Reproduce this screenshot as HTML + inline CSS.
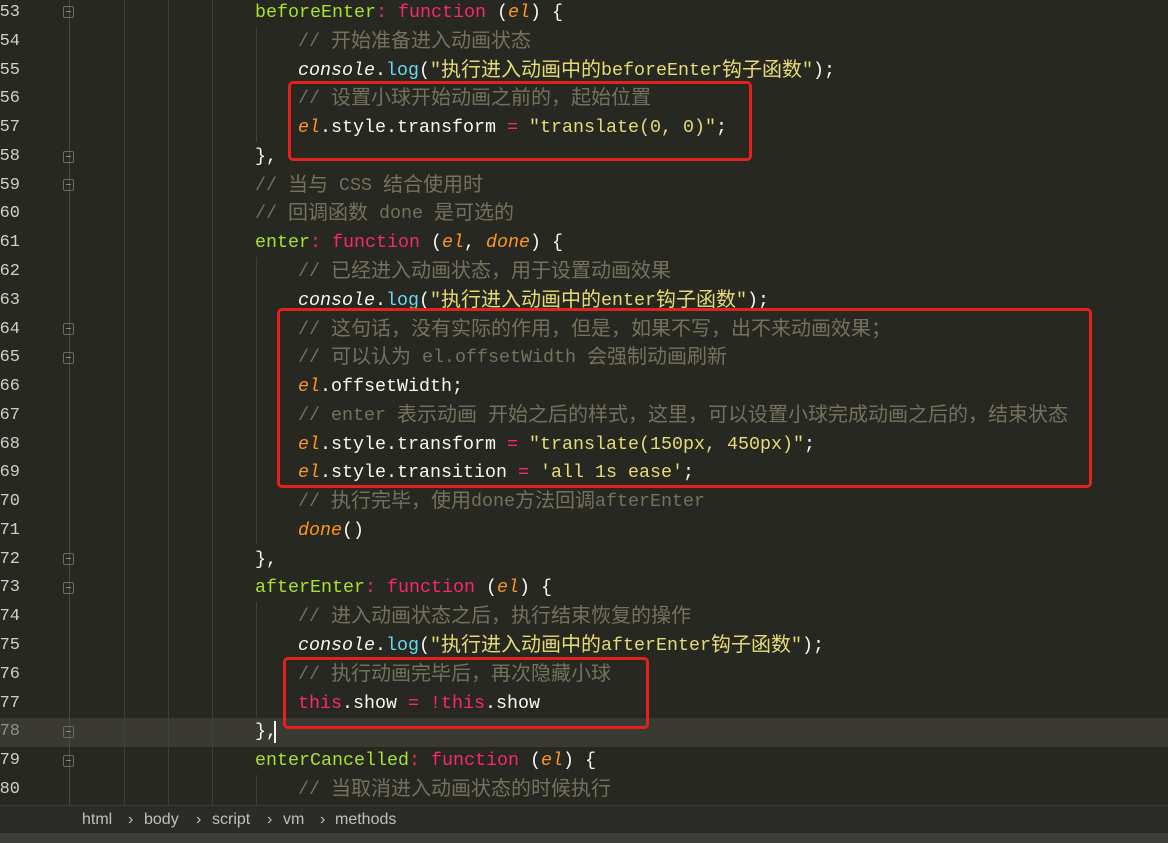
<!DOCTYPE html>
<html><head><meta charset="utf-8"><style>
html,body{margin:0;padding:0;}
body{width:1168px;height:843px;background:#272822;position:relative;overflow:hidden;font-family:"Liberation Mono","Noto Sans CJK SC",monospace;font-size:18.33px;color:#f8f8f2;}
.l{position:absolute;left:0;height:29px;line-height:29px;white-space:pre;width:1168px;}
.n{position:absolute;left:-12px;width:32px;text-align:right;color:#d0d0c8;font-size:17px;}
.t0{position:absolute;left:255px;}
.t1{position:absolute;left:298px;}
.c{font-family:"Noto Sans CJK SC",sans-serif;font-size:20px;line-height:0;position:relative;top:1px;}
.k{color:#a6e22e}.p{color:#f92672}.o{color:#fd971f;font-style:italic}.m{color:#75715e}.s{color:#e6db74}.i{font-style:italic}.b{color:#66d9ef}
.g{position:absolute;width:1px;background:#3f403a;}
.f{position:absolute;left:63px;width:11px;height:12px;border:1px solid #6a6b64;border-radius:2px;box-sizing:border-box;}
.f:after{content:"";position:absolute;left:2px;top:4px;width:5px;height:1px;background:#8a8b84;}
.box{position:absolute;border:3px solid #e3231b;border-radius:5px;box-sizing:border-box;}
</style></head><body>
<div style="position:absolute;left:0;top:718px;width:1168px;height:29px;background:#3a3a33"></div>
<div class="g" style="left:69px;top:0;height:805px;background:#4a4b45"></div>
<div class="g" style="left:124px;top:0;height:805px"></div>
<div class="g" style="left:168px;top:0;height:805px"></div>
<div class="g" style="left:212px;top:0;height:805px"></div>
<div class="g" style="left:256px;top:27px;height:115px"></div>
<div class="g" style="left:256px;top:257px;height:287px"></div>
<div class="g" style="left:256px;top:602px;height:115px"></div>
<div class="g" style="left:256px;top:775px;height:30px"></div>
<div class="f" style="top:6px"></div><div class="f" style="top:151px"></div><div class="f" style="top:179px"></div>
<div class="f" style="top:323px"></div><div class="f" style="top:352px"></div><div class="f" style="top:553px"></div>
<div class="f" style="top:582px"></div><div class="f" style="top:726px"></div><div class="f" style="top:755px"></div>

<div class="l" style="top:-2px"><span class="n">53</span><span class="t0"><span class="k">beforeEnter</span><span class="p">:</span> <span class="p">function</span> (<span class="o">el</span>) {</span></div>
<div class="l" style="top:26.8px"><span class="n">54</span><span class="t1"><span class="m">// <span class="c">开始准备进入动画状态</span></span></span></div>
<div class="l" style="top:55.5px"><span class="n">55</span><span class="t1"><span class="i">console</span>.<span class="b">log</span>(<span class="s">"<span class="c">执行进入动画中的</span>beforeEnter<span class="c">钩子函数</span>"</span>);</span></div>
<div class="l" style="top:84.3px"><span class="n">56</span><span class="t1"><span class="m">// <span class="c">设置小球开始动画之前的，起始位置</span></span></span></div>
<div class="l" style="top:113.1px"><span class="n">57</span><span class="t1"><span class="o">el</span>.style.transform <span class="p">=</span> <span class="s">"translate(0, 0)"</span>;</span></div>
<div class="l" style="top:141.9px"><span class="n">58</span><span class="t0">},</span></div>
<div class="l" style="top:170.6px"><span class="n">59</span><span class="t0"><span class="m">// <span class="c">当与</span> CSS <span class="c">结合使用时</span></span></span></div>
<div class="l" style="top:199.4px"><span class="n">60</span><span class="t0"><span class="m">// <span class="c">回调函数</span> done <span class="c">是可选的</span></span></span></div>
<div class="l" style="top:228.2px"><span class="n">61</span><span class="t0"><span class="k">enter</span><span class="p">:</span> <span class="p">function</span> (<span class="o">el</span>, <span class="o">done</span>) {</span></div>
<div class="l" style="top:256.9px"><span class="n">62</span><span class="t1"><span class="m">// <span class="c">已经进入动画状态，用于设置动画效果</span></span></span></div>
<div class="l" style="top:285.7px"><span class="n">63</span><span class="t1"><span class="i">console</span>.<span class="b">log</span>(<span class="s">"<span class="c">执行进入动画中的</span>enter<span class="c">钩子函数</span>"</span>);</span></div>
<div class="l" style="top:314.5px"><span class="n">64</span><span class="t1"><span class="m">// <span class="c">这句话，没有实际的作用，但是，如果不写，出不来动画效果；</span></span></span></div>
<div class="l" style="top:343.2px"><span class="n">65</span><span class="t1"><span class="m">// <span class="c">可以认为</span> el.offsetWidth <span class="c">会强制动画刷新</span></span></span></div>
<div class="l" style="top:372px"><span class="n">66</span><span class="t1"><span class="o">el</span>.offsetWidth;</span></div>
<div class="l" style="top:400.8px"><span class="n">67</span><span class="t1"><span class="m">// enter <span class="c">表示动画</span> <span class="c">开始之后的样式，这里，可以设置小球完成动画之后的，结束状态</span></span></span></div>
<div class="l" style="top:429.6px"><span class="n">68</span><span class="t1"><span class="o">el</span>.style.transform <span class="p">=</span> <span class="s">"translate(150px, 450px)"</span>;</span></div>
<div class="l" style="top:458.3px"><span class="n">69</span><span class="t1"><span class="o">el</span>.style.transition <span class="p">=</span> <span class="s">'all 1s ease'</span>;</span></div>
<div class="l" style="top:487.1px"><span class="n">70</span><span class="t1"><span class="m">// <span class="c">执行完毕，使用</span>done<span class="c">方法回调</span>afterEnter</span></span></div>
<div class="l" style="top:515.9px"><span class="n">71</span><span class="t1"><span class="o">done</span>()</span></div>
<div class="l" style="top:544.6px"><span class="n">72</span><span class="t0">},</span></div>
<div class="l" style="top:573.4px"><span class="n">73</span><span class="t0"><span class="k">afterEnter</span><span class="p">:</span> <span class="p">function</span> (<span class="o">el</span>) {</span></div>
<div class="l" style="top:602.2px"><span class="n">74</span><span class="t1"><span class="m">// <span class="c">进入动画状态之后，执行结束恢复的操作</span></span></span></div>
<div class="l" style="top:630.9px"><span class="n">75</span><span class="t1"><span class="i">console</span>.<span class="b">log</span>(<span class="s">"<span class="c">执行进入动画中的</span>afterEnter<span class="c">钩子函数</span>"</span>);</span></div>
<div class="l" style="top:659.7px"><span class="n">76</span><span class="t1"><span class="m">// <span class="c">执行动画完毕后，再次隐藏小球</span></span></span></div>
<div class="l" style="top:688.5px"><span class="n">77</span><span class="t1"><span class="p">this</span>.show <span class="p">=</span> <span class="p">!this</span>.show</span></div>
<div class="l" style="top:717.3px"><span class="n" style="color:#8f908a">78</span><span class="t0">},</span></div>
<div class="l" style="top:746px"><span class="n">79</span><span class="t0"><span class="k">enterCancelled</span><span class="p">:</span> <span class="p">function</span> (<span class="o">el</span>) {</span></div>
<div class="l" style="top:774.8px"><span class="n">80</span><span class="t1"><span class="m">// <span class="c">当取消进入动画状态的时候执行</span></span></span></div>

<div class="box" style="left:288px;top:81px;width:464px;height:80px"></div>
<div class="box" style="left:277px;top:308px;width:815px;height:180px"></div>
<div class="box" style="left:283px;top:657px;width:366px;height:72px"></div>
<div style="position:absolute;left:274px;top:721px;width:2px;height:22px;background:#f8f8f0"></div>
<div style="position:absolute;left:0;top:805px;width:1168px;height:28px;background:#2b2c27;border-top:1px solid #3a3b36;font-family:'Liberation Sans',sans-serif;font-size:16px;color:#c0c0b8;line-height:28px;">
<span style="position:absolute;left:82px">html</span><span style="position:absolute;left:128px">›</span>
<span style="position:absolute;left:144px">body</span><span style="position:absolute;left:196px">›</span>
<span style="position:absolute;left:212px">script</span><span style="position:absolute;left:267px">›</span>
<span style="position:absolute;left:283px">vm</span><span style="position:absolute;left:320px">›</span>
<span style="position:absolute;left:335px">methods</span></div>
<div style="position:absolute;left:0;top:833px;width:1168px;height:10px;background:#3d3e3a"></div>
</body></html>
